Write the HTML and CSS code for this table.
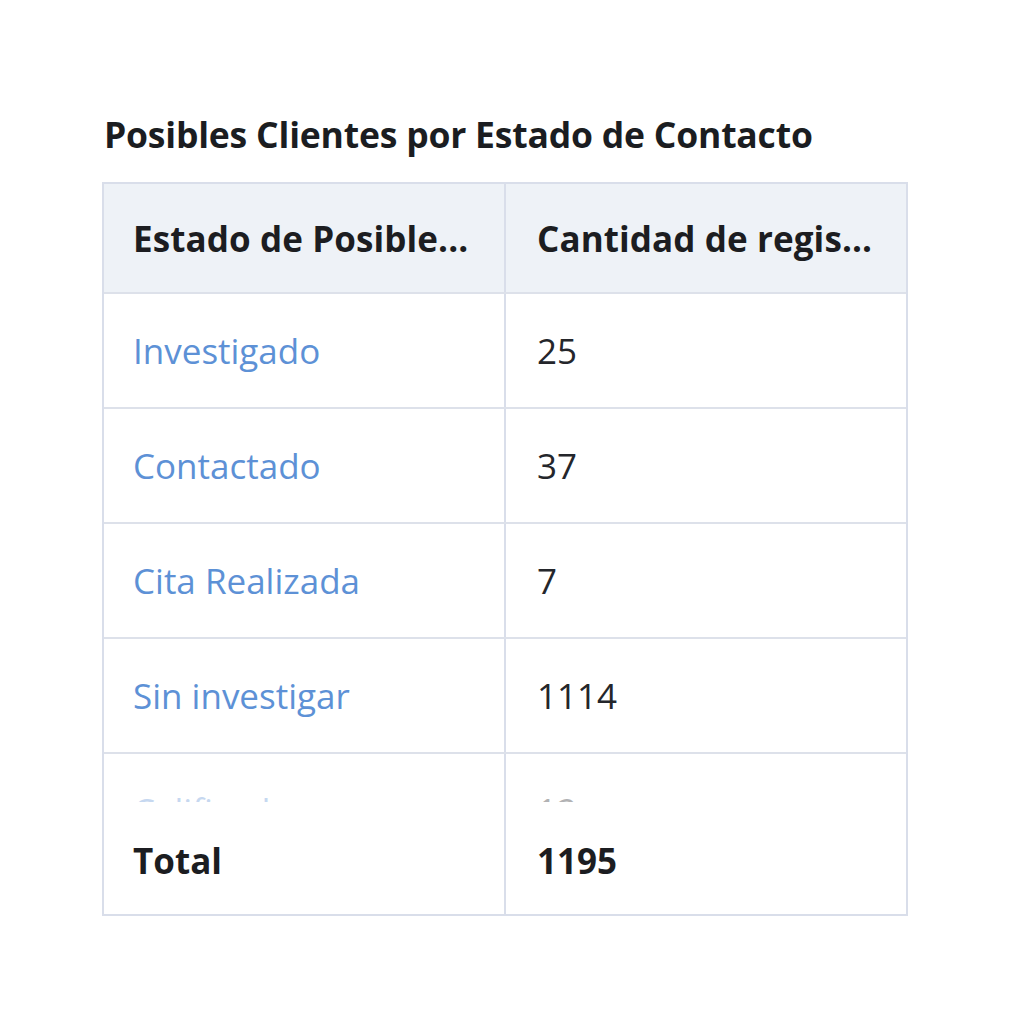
FILE: index.html
```html
<!DOCTYPE html>
<html lang="es">
<head>
<meta charset="utf-8">
<title>Posibles Clientes por Estado de Contacto</title>
<link rel="stylesheet" href="styles.css">
</head>
<body>
<main class="page">
  <h1 class="title">Posibles Clientes por Estado de Contacto</h1>
  <div class="report">
    <div class="row head">
      <div class="cell">Estado de Posible...</div>
      <div class="cell">Cantidad de regis...</div>
    </div>
    <div class="row">
      <div class="cell link">Investigado</div>
      <div class="cell">25</div>
    </div>
    <div class="row">
      <div class="cell link">Contactado</div>
      <div class="cell">37</div>
    </div>
    <div class="row">
      <div class="cell link">Cita Realizada</div>
      <div class="cell">7</div>
    </div>
    <div class="row">
      <div class="cell link">Sin investigar</div>
      <div class="cell">1114</div>
    </div>
    <div class="row clipped">
      <div class="cell link"><span class="peek">Calificado</span></div>
      <div class="cell"><span class="peek">12</span></div>
    </div>
    <div class="row foot">
      <div class="cell">Total</div>
      <div class="cell">1195</div>
    </div>
  </div>
</main>
</body>
</html>
```

FILE: styles.css
```css
html, body {
  margin: 0;
  padding: 0;
  background: #ffffff;
}

body {
  font-family: "Open Sans", "Lato", "Liberation Sans", sans-serif;
  color: #1f2126;
}

.page {
  width: 806px;
  padding: 112px 0 0 102px;
}

.title {
  margin: 0 0 26px 2px;
  font-size: 35.5px;
  font-weight: 700;
  line-height: 44px;
  letter-spacing: -0.2px;
  color: #1b1d21;
}

.report {
  border: 2px solid #d9deea;
  display: flex;
  flex-direction: column;
}

.row {
  display: grid;
  grid-template-columns: 400px 1fr;
  height: 113px;
  border-top: 2px solid #dde1ea;
}

.row:first-child {
  border-top: 0;
}

.cell {
  display: flex;
  align-items: center;
  padding-left: 29px;
  font-size: 35px;
  color: #24262b;
  overflow: hidden;
  white-space: nowrap;
}

.cell + .cell {
  border-left: 2px solid #d9deea;
  padding-left: 31px;
}

.head {
  height: 108px;
  background: #eef2f7;
}

.head .cell,
.foot .cell {
  font-weight: 700;
  color: #1c1d21;
}

.head .cell {
  letter-spacing: 0.1px;
}

.link {
  color: #5d91d6;
}

.clipped {
  height: 52px;
}

.clipped .cell {
  align-items: flex-start;
  height: 52px;
}

.peek {
  display: block;
  height: 11px;
  overflow: hidden;
  margin-top: 37px;
  line-height: 40px;
  opacity: 0.35;
}

.foot {
  height: 108px;
  border-top: 0;
}
```
